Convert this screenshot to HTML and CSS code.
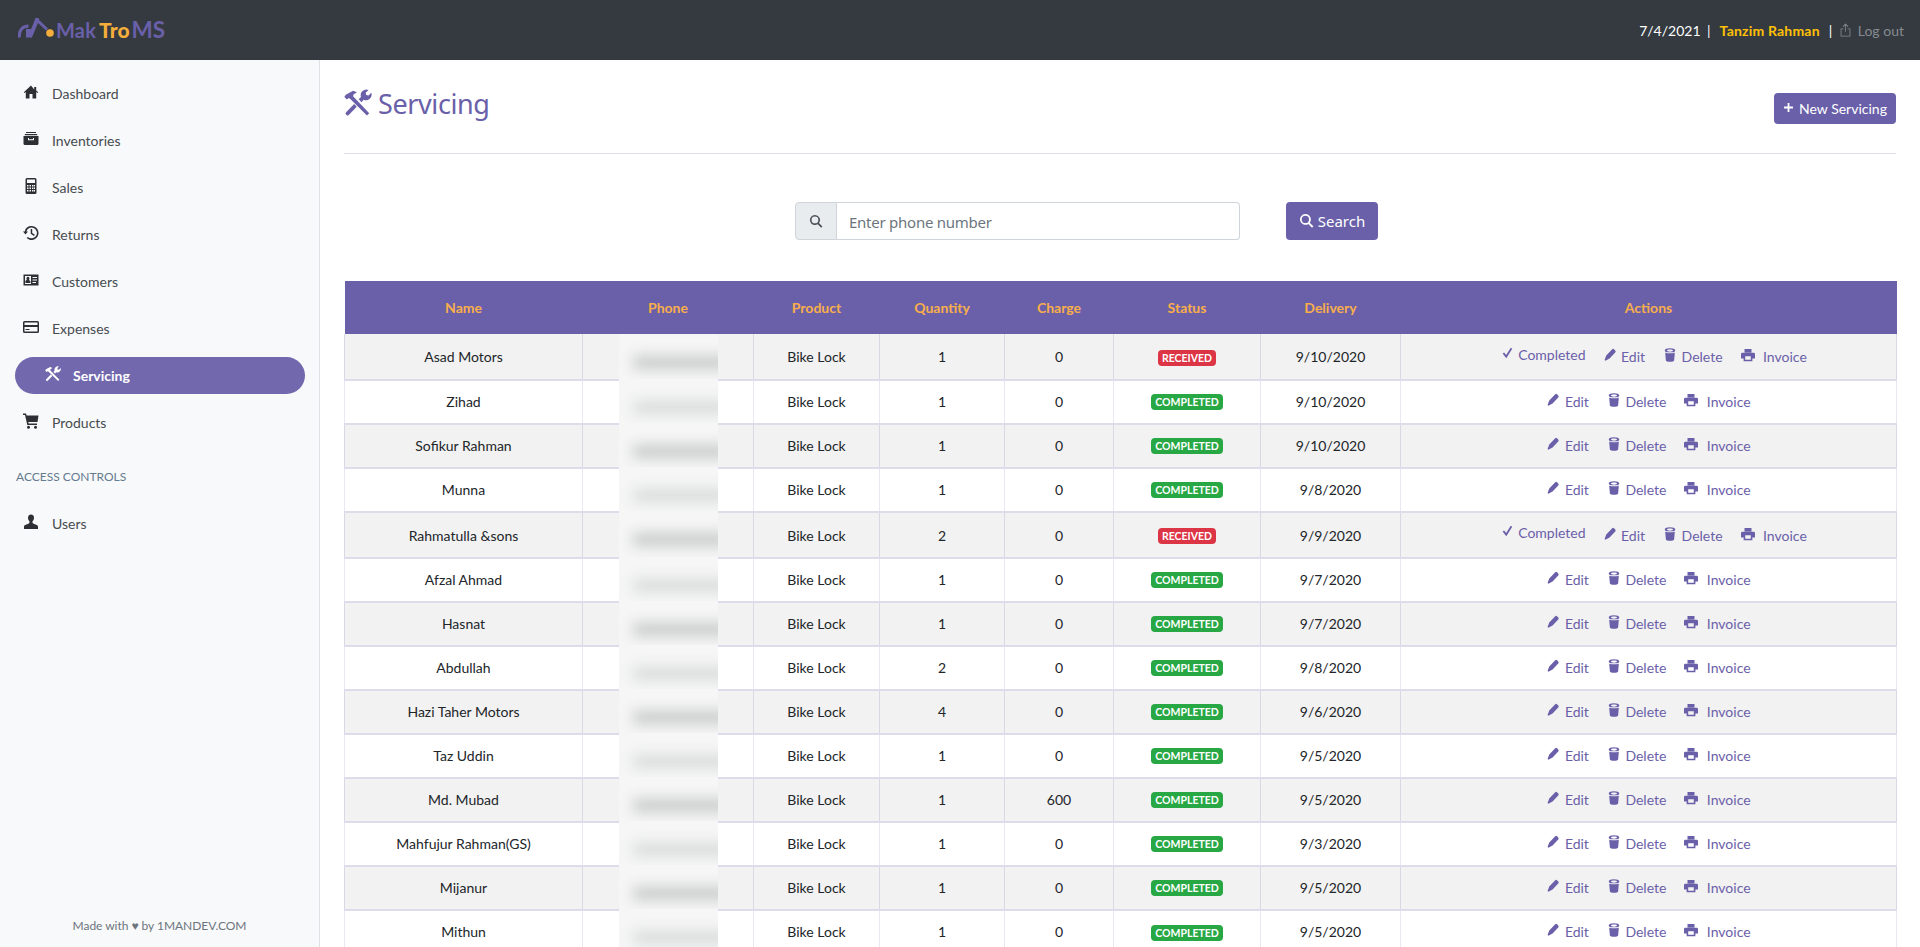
FILE: index.html
```html
<!DOCTYPE html>
<html lang="en">
<head>
<meta charset="utf-8">
<title>Servicing</title>
<link rel="stylesheet" href="styles.css">
</head>
<body>
<svg class="sprite" xmlns="http://www.w3.org/2000/svg">
  <symbol id="i-home" viewBox="0 0 16 16"><path d="M8 1.5 .8 8.3l.8.8 1.2-1V14.5h3.7V10h3v4.5h3.7V8.1l1.2 1 .8-.8-2-1.9V3h-2v2.5z"/></symbol>
  <symbol id="i-box" viewBox="0 0 16 16"><path fill-rule="evenodd" d="M3 1h10v1H3zM1.8 3h12.4v1.2H1.8zM.5 5h15v7.5a1.5 1.5 0 0 1-1.5 1.5H2A1.5 1.5 0 0 1 .5 12.500zM5 7v2.300h6V7h-1v1.200H6V7z"/></symbol>
  <symbol id="i-calc" viewBox="0 0 16 16"><path fill-rule="evenodd" d="M4 0h8a1.500 1.500 0 0 1 1.500 1.500v13A1.500 1.500 0 0 1 12 16H4a1.500 1.500 0 0 1-1.500-1.500v-13A1.500 1.500 0 0 1 4 0zM4 1.500V5h8V1.500zM4 7v1.500h1.500V7zm2.500 0v1.500H8V7zM9 7v1.500h1.500V7zm2 0v1.500h1V7zM4 9.500V11h1.500V9.500zm2.500 0V11H8V9.500zm2.500 0V11h1.500V9.500zm2 0V11h1V9.500zM4 12v1.500h1.500V12zm2.500 0v1.500H8V12zM9 12v1.500h1.500V12zm2 0v1.500h1V12z"/></symbol>
  <symbol id="i-hist" viewBox="0 0 16 16"><path d="M8.500 1A7 7 0 0 0 1.700 6.500H0l2.500 3 2.500-3H3.300a5.400 5.400 0 1 1 1.500 5.400l-1.100 1.200A7 7 0 1 0 8.500 1z"/><path d="M7.700 4h1.500v4l2.600 1.700-.8 1.200-3.300-2.200z"/></symbol>
  <symbol id="i-card" viewBox="0 0 16 16"><path fill-rule="evenodd" d="M.5 2.500h15v11H.5zM2 4v8h6V4zm7.500 1v1H14V5zm0 2.500v1H14v-1zm0 2.500v1H13v-1zM5 4.800a1.500 1.500 0 0 1 1.300 2.200c-.2.500-.4.900-.1 1.300.4.500 1.200.5 1.200 1.200V11h-5V9.300c0-.7.800-.7 1.200-1.200.3-.4.100-.8-.1-1.300A1.500 1.500 0 0 1 5 4.800z"/></symbol>
  <symbol id="i-credit" viewBox="0 0 16 16"><path fill-rule="evenodd" d="M1.500 2h13A1.500 1.500 0 0 1 16 3.500v9a1.500 1.500 0 0 1-1.500 1.500h-13A1.500 1.500 0 0 1 0 12.500v-9A1.500 1.500 0 0 1 1.500 2zm0 1.500V6h13V3.500zm0 4.500v4.500h13V8zm1 2h4v1h-4z"/></symbol>
  <symbol id="i-tools" viewBox="0 0 16 16"><path d="M5.200 1 1 3.300l-.8 1.300 1.400 1.400 1.100-.8.900.5 9.500 9.400 1.300-1.300L5.200 4.200l.2-1 2-1.300z"/><path d="M15.600 2.100 14 3.700l-1.300-.3-.3-1.300L14 .5a3.300 3.300 0 0 0-4.300 4.100L8.400 5.900l1.600 1.600 1.200-1.300a3.300 3.300 0 0 0 4.400-4.100z"/><path d="M5.800 8.600 1.200 13.300a.9.900 0 0 0 0 1.300l.2.200a.9.900 0 0 0 1.300 0l4.600-4.700z"/></symbol>
  <symbol id="i-cart" viewBox="0 0 16 16"><path d="M0 .5h3l.6 2H15.500l-1 6.500H5.300l.3 1.500H14v1.500H4.300L2 2H0z"/><circle cx="5.500" cy="14.200" r="1.500"/><circle cx="12.500" cy="14.200" r="1.500"/></symbol>
  <symbol id="i-user" viewBox="0 0 16 16"><path d="M8 .5c2 0 3 1.400 3 3.300 0 1.400-.6 2.600-1.300 3.300-.4.500-.3 1.600.2 2.100.9.900 5.100 1.400 5.100 3.300v2.500H1v-2.500c0-1.900 4.200-2.400 5.100-3.300.5-.5.600-1.600.2-2.100C5.600 6.400 5 5.200 5 3.800 5 1.900 6 .5 8 .5z"/></symbol>
  <symbol id="i-check" viewBox="0 0 16 16"><path d="m3 8.500 1.700-1.200L7 10.200 12.300 2 14 3 7.200 14z"/></symbol>
  <symbol id="i-pencil" viewBox="0 0 16 16"><path d="M10.500 1.500a1.500 1.500 0 0 1 2.100 0l1.400 1.400a1.500 1.500 0 0 1 0 2.100L7.500 12 2.700 14.500 1.800 13.600l1.900-5z"/></symbol>
  <symbol id="i-trash" viewBox="0 0 16 16"><path fill-rule="evenodd" d="M8 .3c3.500 0 6 1 6 2.600 0 .9-.8 1.600-2 2H4c-1.200-.4-2-1.100-2-2C2 1.300 4.500.3 8 .3zm0 1.300c-2 0-3.500.5-3.500 1.300S6 4.200 8 4.200s3.500-.5 3.500-1.300S10 1.600 8 1.600z"/><path d="M2.500 5.300c3 1 8 1 11 0l-.8 9c-.1 1-2.200 1.500-4.700 1.500s-4.600-.5-4.700-1.500z"/></symbol>
  <symbol id="i-print" viewBox="0 0 16 16"><path fill-rule="evenodd" d="M4 1h8v4H4zM1.500 5.500h13A1.500 1.500 0 0 1 16 7v5h-3v3H3v-3H0V7a1.500 1.500 0 0 1 1.500-1.500zM4.800 9.500v3.800h6.400V9.500z"/></symbol>
  <symbol id="i-search" viewBox="0 0 16 16"><path fill-rule="evenodd" d="M6.800 1a5.800 5.800 0 0 1 4.600 9.300l3.900 3.900-1.400 1.400-3.900-3.900A5.800 5.800 0 1 1 6.800 1zm0 1.900a3.900 3.900 0 1 0 0 7.800 3.900 3.900 0 0 0 0-7.800z"/></symbol>
  <symbol id="i-plus" viewBox="0 0 16 16"><path d="M6.700 1.500h2.600v5.200h5.200v2.600H9.300v5.200H6.700V9.300H1.500V6.700h5.200z"/></symbol>
  <symbol id="i-share" viewBox="0 0 16 16"><path d="M8 0 4.500 3.500l.8.8L7.500 2.200V10h1V2.200l2.200 2.100.8-.8z"/><path d="M5.500 6H2v10h12V6h-3.500v1H13v8H3V7h2.500z"/></symbol>
</svg>

<header class="topbar">
  <a class="logo" href="#">
    <svg class="logo-mark" viewBox="0 0 38 23" xmlns="http://www.w3.org/2000/svg">
      <path class="logo-arc" d="M1.500 20.500c-1-7 3-11.500 9-11.500"/>
      <path class="logo-purple" d="M8 12h5v8.500H8z"/>
      <path class="logo-arm" d="m12 20 7-17"/>
      <path class="logo-arm2" d="m19 3 10 9.500"/>
      <circle class="logo-purple" cx="19" cy="3" r="2.300"/>
      <circle class="logo-gold" cx="32" cy="16" r="3.800"/>
    </svg>
    <span class="logo-text"><span class="lg-mak">Mak</span><span class="lg-tro">Tro</span><span class="lg-ms">MS</span></span>
  </a>
  <div class="top-info">
    <span class="top-date">7/4/2021</span>
    <span class="top-sep">|</span>
    <span class="top-user">Tanzim Rahman</span>
    <span class="top-sep top-sep-end">|</span>
    <a class="top-logout" href="#"><svg class="ic"><use href="#i-share"/></svg>Log out</a>
  </div>
</header>

<div class="shell">
  <aside class="sidebar">
    <nav class="nav">
      <a class="nav-item" href="#"><svg class="ic"><use href="#i-home"/></svg>Dashboard</a>
      <a class="nav-item" href="#"><svg class="ic"><use href="#i-box"/></svg>Inventories</a>
      <a class="nav-item" href="#"><svg class="ic"><use href="#i-calc"/></svg>Sales</a>
      <a class="nav-item" href="#"><svg class="ic"><use href="#i-hist"/></svg>Returns</a>
      <a class="nav-item" href="#"><svg class="ic"><use href="#i-card"/></svg>Customers</a>
      <a class="nav-item" href="#"><svg class="ic"><use href="#i-credit"/></svg>Expenses</a>
      <a class="nav-item is-active" href="#"><svg class="ic"><use href="#i-tools"/></svg>Servicing</a>
      <a class="nav-item" href="#"><svg class="ic"><use href="#i-cart"/></svg>Products</a>
      <h6 class="nav-heading">Access Controls</h6>
      <a class="nav-item" href="#"><svg class="ic"><use href="#i-user"/></svg>Users</a>
    </nav>
    <p class="made">Made with ♥ by 1MANDEV.COM</p>
  </aside>

  <main class="main">
    <div class="page-head">
      <h1 class="page-title"><svg class="title-ic"><use href="#i-tools"/></svg>Servicing</h1>
      <a class="btn btn-new" href="#"><svg class="ic-sm"><use href="#i-plus"/></svg>New Servicing</a>
    </div>

    <form class="search-row">
      <div class="input-group">
        <span class="input-addon"><svg class="ic-sm"><use href="#i-search"/></svg></span>
        <input class="input" type="text" placeholder="Enter phone number">
      </div>
      <button class="btn btn-search" type="button"><svg class="ic-sm"><use href="#i-search"/></svg>Search</button>
    </form>

    <table class="grid">
      <colgroup>
        <col class="c-name"><col class="c-phone"><col class="c-product"><col class="c-qty"><col class="c-charge"><col class="c-status"><col class="c-delivery"><col class="c-actions">
      </colgroup>
      <thead>
        <tr><th>Name</th><th>Phone</th><th>Product</th><th>Quantity</th><th>Charge</th><th>Status</th><th>Delivery</th><th>Actions</th></tr>
      </thead>
      <tbody>
        <tr class="tall">
          <td>Asad Motors</td><td class="phone"><span class="mask"><span class="smear"></span></span></td><td>Bike Lock</td><td>1</td><td>0</td><td><span class="badge red">RECEIVED</span></td><td>9/10/2020</td>
          <td><div class="acts"><a class="act act-up" href="#"><svg class="ic-sm"><use href="#i-check"/></svg>Completed</a><a class="act" href="#"><svg class="ic-sm"><use href="#i-pencil"/></svg>Edit</a><a class="act" href="#"><svg class="ic-sm"><use href="#i-trash"/></svg>Delete</a><a class="act act-print" href="#"><svg class="ic-sm"><use href="#i-print"/></svg>Invoice</a></div></td>
        </tr>
        <tr>
          <td>Zihad</td><td class="phone"><span class="mask"><span class="smear light"></span></span></td><td>Bike Lock</td><td>1</td><td>0</td><td><span class="badge green">COMPLETED</span></td><td>9/10/2020</td>
          <td><div class="acts"><a class="act" href="#"><svg class="ic-sm"><use href="#i-pencil"/></svg>Edit</a><a class="act" href="#"><svg class="ic-sm"><use href="#i-trash"/></svg>Delete</a><a class="act act-print" href="#"><svg class="ic-sm"><use href="#i-print"/></svg>Invoice</a></div></td>
        </tr>
        <tr>
          <td>Sofikur Rahman</td><td class="phone"><span class="mask"><span class="smear"></span></span></td><td>Bike Lock</td><td>1</td><td>0</td><td><span class="badge green">COMPLETED</span></td><td>9/10/2020</td>
          <td><div class="acts"><a class="act" href="#"><svg class="ic-sm"><use href="#i-pencil"/></svg>Edit</a><a class="act" href="#"><svg class="ic-sm"><use href="#i-trash"/></svg>Delete</a><a class="act act-print" href="#"><svg class="ic-sm"><use href="#i-print"/></svg>Invoice</a></div></td>
        </tr>
        <tr>
          <td>Munna</td><td class="phone"><span class="mask"><span class="smear light"></span></span></td><td>Bike Lock</td><td>1</td><td>0</td><td><span class="badge green">COMPLETED</span></td><td>9/8/2020</td>
          <td><div class="acts"><a class="act" href="#"><svg class="ic-sm"><use href="#i-pencil"/></svg>Edit</a><a class="act" href="#"><svg class="ic-sm"><use href="#i-trash"/></svg>Delete</a><a class="act act-print" href="#"><svg class="ic-sm"><use href="#i-print"/></svg>Invoice</a></div></td>
        </tr>
        <tr class="tall">
          <td>Rahmatulla &amp;sons</td><td class="phone"><span class="mask"><span class="smear"></span></span></td><td>Bike Lock</td><td>2</td><td>0</td><td><span class="badge red">RECEIVED</span></td><td>9/9/2020</td>
          <td><div class="acts"><a class="act act-up" href="#"><svg class="ic-sm"><use href="#i-check"/></svg>Completed</a><a class="act" href="#"><svg class="ic-sm"><use href="#i-pencil"/></svg>Edit</a><a class="act" href="#"><svg class="ic-sm"><use href="#i-trash"/></svg>Delete</a><a class="act act-print" href="#"><svg class="ic-sm"><use href="#i-print"/></svg>Invoice</a></div></td>
        </tr>
        <tr>
          <td>Afzal Ahmad</td><td class="phone"><span class="mask"><span class="smear light"></span></span></td><td>Bike Lock</td><td>1</td><td>0</td><td><span class="badge green">COMPLETED</span></td><td>9/7/2020</td>
          <td><div class="acts"><a class="act" href="#"><svg class="ic-sm"><use href="#i-pencil"/></svg>Edit</a><a class="act" href="#"><svg class="ic-sm"><use href="#i-trash"/></svg>Delete</a><a class="act act-print" href="#"><svg class="ic-sm"><use href="#i-print"/></svg>Invoice</a></div></td>
        </tr>
        <tr>
          <td>Hasnat</td><td class="phone"><span class="mask"><span class="smear"></span></span></td><td>Bike Lock</td><td>1</td><td>0</td><td><span class="badge green">COMPLETED</span></td><td>9/7/2020</td>
          <td><div class="acts"><a class="act" href="#"><svg class="ic-sm"><use href="#i-pencil"/></svg>Edit</a><a class="act" href="#"><svg class="ic-sm"><use href="#i-trash"/></svg>Delete</a><a class="act act-print" href="#"><svg class="ic-sm"><use href="#i-print"/></svg>Invoice</a></div></td>
        </tr>
        <tr>
          <td>Abdullah</td><td class="phone"><span class="mask"><span class="smear light"></span></span></td><td>Bike Lock</td><td>2</td><td>0</td><td><span class="badge green">COMPLETED</span></td><td>9/8/2020</td>
          <td><div class="acts"><a class="act" href="#"><svg class="ic-sm"><use href="#i-pencil"/></svg>Edit</a><a class="act" href="#"><svg class="ic-sm"><use href="#i-trash"/></svg>Delete</a><a class="act act-print" href="#"><svg class="ic-sm"><use href="#i-print"/></svg>Invoice</a></div></td>
        </tr>
        <tr>
          <td>Hazi Taher Motors</td><td class="phone"><span class="mask"><span class="smear"></span></span></td><td>Bike Lock</td><td>4</td><td>0</td><td><span class="badge green">COMPLETED</span></td><td>9/6/2020</td>
          <td><div class="acts"><a class="act" href="#"><svg class="ic-sm"><use href="#i-pencil"/></svg>Edit</a><a class="act" href="#"><svg class="ic-sm"><use href="#i-trash"/></svg>Delete</a><a class="act act-print" href="#"><svg class="ic-sm"><use href="#i-print"/></svg>Invoice</a></div></td>
        </tr>
        <tr>
          <td>Taz Uddin</td><td class="phone"><span class="mask"><span class="smear light"></span></span></td><td>Bike Lock</td><td>1</td><td>0</td><td><span class="badge green">COMPLETED</span></td><td>9/5/2020</td>
          <td><div class="acts"><a class="act" href="#"><svg class="ic-sm"><use href="#i-pencil"/></svg>Edit</a><a class="act" href="#"><svg class="ic-sm"><use href="#i-trash"/></svg>Delete</a><a class="act act-print" href="#"><svg class="ic-sm"><use href="#i-print"/></svg>Invoice</a></div></td>
        </tr>
        <tr>
          <td>Md. Mubad</td><td class="phone"><span class="mask"><span class="smear"></span></span></td><td>Bike Lock</td><td>1</td><td>600</td><td><span class="badge green">COMPLETED</span></td><td>9/5/2020</td>
          <td><div class="acts"><a class="act" href="#"><svg class="ic-sm"><use href="#i-pencil"/></svg>Edit</a><a class="act" href="#"><svg class="ic-sm"><use href="#i-trash"/></svg>Delete</a><a class="act act-print" href="#"><svg class="ic-sm"><use href="#i-print"/></svg>Invoice</a></div></td>
        </tr>
        <tr>
          <td>Mahfujur Rahman(GS)</td><td class="phone"><span class="mask"><span class="smear light"></span></span></td><td>Bike Lock</td><td>1</td><td>0</td><td><span class="badge green">COMPLETED</span></td><td>9/3/2020</td>
          <td><div class="acts"><a class="act" href="#"><svg class="ic-sm"><use href="#i-pencil"/></svg>Edit</a><a class="act" href="#"><svg class="ic-sm"><use href="#i-trash"/></svg>Delete</a><a class="act act-print" href="#"><svg class="ic-sm"><use href="#i-print"/></svg>Invoice</a></div></td>
        </tr>
        <tr>
          <td>Mijanur</td><td class="phone"><span class="mask"><span class="smear"></span></span></td><td>Bike Lock</td><td>1</td><td>0</td><td><span class="badge green">COMPLETED</span></td><td>9/5/2020</td>
          <td><div class="acts"><a class="act" href="#"><svg class="ic-sm"><use href="#i-pencil"/></svg>Edit</a><a class="act" href="#"><svg class="ic-sm"><use href="#i-trash"/></svg>Delete</a><a class="act act-print" href="#"><svg class="ic-sm"><use href="#i-print"/></svg>Invoice</a></div></td>
        </tr>
        <tr>
          <td>Mithun</td><td class="phone"><span class="mask"><span class="smear light"></span></span></td><td>Bike Lock</td><td>1</td><td>0</td><td><span class="badge green">COMPLETED</span></td><td>9/5/2020</td>
          <td><div class="acts"><a class="act" href="#"><svg class="ic-sm"><use href="#i-pencil"/></svg>Edit</a><a class="act" href="#"><svg class="ic-sm"><use href="#i-trash"/></svg>Delete</a><a class="act act-print" href="#"><svg class="ic-sm"><use href="#i-print"/></svg>Invoice</a></div></td>
        </tr>
      </tbody>
    </table>
  </main>
</div>
</body>
</html>
```

FILE: styles.css
```css
* { box-sizing: border-box; }
html, body { height: 100%; }
body {
  margin: 0;
  overflow: hidden;
  display: flex;
  flex-direction: column;
  font-family: "Lato", "Liberation Sans", sans-serif;
  font-size: 14px;
  color: #212529;
  background: #fff;
}
a { text-decoration: none; color: inherit; }
.sprite { display: none; }
.ic, .ic-sm, .title-ic { fill: currentColor; flex: none; }

/* top bar */
.topbar {
  height: 60px;
  flex: none;
  background: #343a40;
  display: flex;
  align-items: center;
  justify-content: space-between;
  padding: 0 16px 0 18px;
}
.logo { display: flex; align-items: center; }
.logo-mark { width: 38px; height: 23px; margin-top: -3px; }
.logo-purple { fill: #6a60a9; }
.logo-gold { fill: #f5ae3c; }
.logo-arc { stroke: #6a60a9; stroke-width: 3; fill: none; }
.logo-arm { stroke: #6a60a9; stroke-width: 4; fill: none; }
.logo-arm2 { stroke: #6a60a9; stroke-width: 3; fill: none; }
.logo-text { display: flex; align-items: baseline; font-weight: 700; font-size: 21px; line-height: 1; }
.lg-mak { color: #6a60a9; font-size: 20px; letter-spacing: .2px; }
.lg-tro { color: #f5ae3c; margin-left: 3px; font-weight: 900; }
.lg-ms { color: #6a60a9; font-size: 22.500px; font-weight: 700; margin-left: 2px; }
.top-info { display: flex; align-items: center; gap: 8px; font-size: 14px; }
.top-date { color: #fff; margin-right: -2.500px; }
.top-sep { color: #fff; margin: 0 1px; }
.top-sep-end { margin-right: -1.500px; }
.top-user { color: #ffc107; font-weight: 700; letter-spacing: .2px; }
.top-logout { display: flex; align-items: center; gap: 6px; color: #868b90; }
.top-logout .ic { width: 13px; height: 14px; }

/* layout */
.shell { flex: 1; display: flex; min-height: 0; }
.sidebar {
  width: 320px;
  flex: none;
  background: #f8f9fa;
  border-right: 1px solid #dee2e6;
  display: flex;
  flex-direction: column;
  padding-top: 10px;
}
.nav { display: flex; flex-direction: column; }
.nav-item {
  display: flex;
  align-items: center;
  height: 37px;
  margin: 5px 14px 5px 15px;
  padding-left: 8px;
  gap: 13px;
  color: #474c51;
  border-radius: 19px;
}
.nav-item .ic { width: 16px; height: 16px; margin-top: -3px; color: #2c3034; }
.nav-item.is-active {
  background: #7268ae;
  color: #fff;
  font-weight: 700;
  padding-left: 30px;
  gap: 12px;
}
.nav-item.is-active .ic { color: #fff; }
.nav-heading {
  margin: 0;
  padding: 0 16px;
  height: 54px;
  line-height: 61px;
  font-size: 12px;
  font-weight: 400;
  text-transform: uppercase;
  color: #657b90;
}
.made { margin: auto 0 14px; text-align: center; font-size: 12px; letter-spacing: -.03px; color: #6c757d; }

/* main */
.main { flex: 1; min-width: 0; padding: 0 24px; }
.page-head {
  display: flex;
  justify-content: space-between;
  align-items: flex-start;
  height: 94px;
  padding-top: 33px;
  border-bottom: 1px solid #dee2e6;
}
.page-title {
  margin: -11px 0 0;
  display: flex;
  align-items: center;
  gap: 6px;
  font-family: "Noto Sans", sans-serif;
  font-size: 27px;
  font-weight: 400;
  letter-spacing: -.4px;
  color: #6a60a9;
  line-height: 44px;
}
.title-ic { width: 28px; height: 28px; margin-top: -3px; }
.btn {
  display: inline-flex;
  align-items: center;
  justify-content: center;
  background: #6a60a9;
  color: #fff;
  border: 0;
  border-radius: 4px;
  font-family: inherit;
}
.btn-new { width: 122px; height: 31px; gap: 5px; font-size: 14px; }
.btn-new .ic-sm { width: 11px; height: 11px; margin-top: -2px; }
.search-row { display: flex; gap: 46px; padding: 48px 0 0 451px; height: 127px; }
.input-group { display: flex; width: 445px; height: 38px; }
.input-addon {
  width: 42px;
  display: flex;
  align-items: center;
  justify-content: center;
  background: #e9ecef;
  border: 1px solid #ced4da;
  border-radius: 4px 0 0 4px;
  color: #495057;
}
.input-addon .ic-sm { width: 14px; height: 14px; }
.input {
  flex: 1;
  min-width: 0;
  border: 1px solid #ced4da;
  border-left: 0;
  border-radius: 0 4px 4px 0;
  padding: 2px 12px 0;
  font-family: "Noto Sans", sans-serif;
  font-size: 15px;
  letter-spacing: -.25px;
  color: #495057;
}
.input::placeholder { color: #6c757d; opacity: 1; }
.btn-search { width: 92px; height: 38px; gap: 4px; font-family: "Noto Sans", sans-serif; font-size: 15px; }
.btn-search .ic-sm { width: 15px; height: 15px; margin-top: -2px; }

/* table */
.grid { width: 1552px; table-layout: fixed; border-collapse: collapse; text-align: center; }
.c-name { width: 238px; }
.c-phone { width: 171px; }
.c-product { width: 126px; }
.c-qty { width: 125px; }
.c-charge { width: 109px; }
.c-status { width: 147px; }
.c-delivery { width: 140px; }
.c-actions { width: 496px; }
.grid th {
  height: 53px;
  background: #6a60a9;
  color: #f8ae4c;
  font-weight: 700;
  font-size: 14px;
  padding: 0;
  border: 0;
}
.grid td {
  height: 44px;
  padding: 0 0 2px;
  border: 1px solid #dedbeb;
  border-width: 2px 1px 0;
}
.grid tr.tall td { height: 46px; padding-bottom: 0; }
.grid tbody tr:nth-child(odd) td { background: #f2f2f2; border-left-color: #d9d6e6; border-right-color: #d9d6e6; }
.grid tbody tr:nth-child(even) td { border-left-color: #e9e7f4; border-right-color: #e9e7f4; }
.grid tbody tr:first-child td { border-top: 0; }
.grid td.phone { position: relative; }
.mask {
  position: absolute;
  top: -2px;
  bottom: 0;
  left: 36px;
  width: 99px;
  background: #f6f6f6;
  overflow: hidden;
}
.grid tbody tr:first-child .mask { top: 0; }
.smear {
  position: absolute;
  left: 14px;
  right: -12px;
  top: 22px;
  height: 13px;
  background: #c6c8c8;
  filter: blur(7px);
}
.smear.light { background: #d8dbdb; }
.badge {
  display: inline-block;
  font-size: 10.500px;
  font-weight: 700;
  line-height: 16px;
  height: 16px;
  color: #fff;
  border-radius: 4px;
  padding: 0 4px;
  vertical-align: middle;
}
.red { background: #dc3545; }
.green { background: #28a745; }
.acts { display: flex; align-items: center; justify-content: center; gap: 18px; color: #6a60a9; }
.act { display: inline-flex; align-items: center; gap: 4.500px; }
.act .ic-sm { width: 14px; height: 14px; margin-top: -3px; }
.act-print { gap: 8.500px; }
.act-up { margin: -5px -1px 0 10px; gap: 4px; }
```
